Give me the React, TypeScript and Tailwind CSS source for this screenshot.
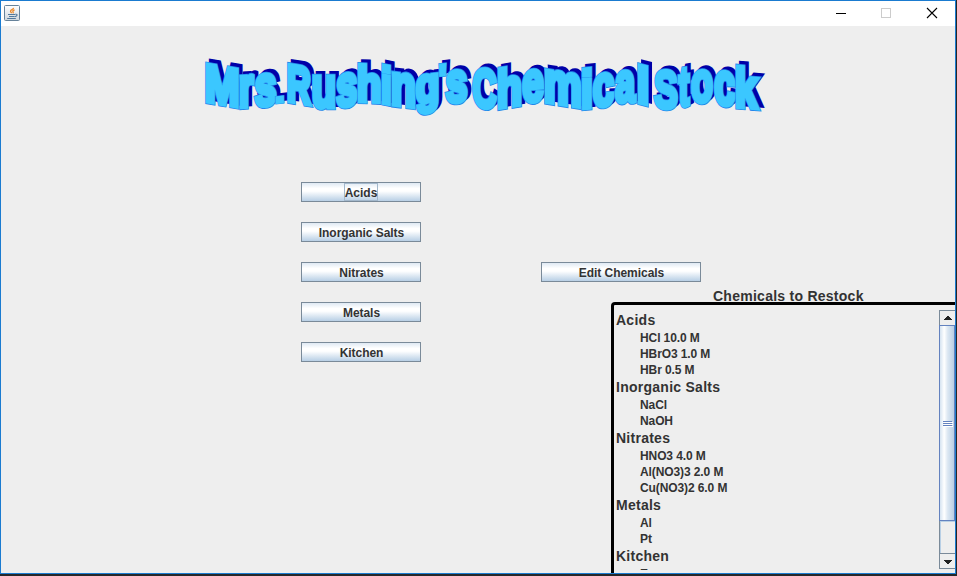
import React from "react";

type Glyph = {
  ch: string;
  left: number;
  right: number;
  top: number;
  bottom: number;
  drop: number;
};

const g = (ch: string, left: number, right: number, top: number, bottom: number, drop = 0): Glyph => ({
  ch, left, right, top, bottom, drop,
});

// Letter boxes of the warped banner, in window coordinates.
const BANNER: Glyph[] = [
  g("M", 205, 239.5, 61, 103.5, 6),
  g("r", 239, 255, 74, 110, -1),
  g("s", 253.5, 277, 73, 109, -2),
  g(".", 275, 284.5, 96, 104.5, -1),
  g("R", 287, 312.5, 61.5, 103.5, 4),
  g("u", 312, 336, 73, 110, 0),
  g("s", 335, 358, 73, 110, -3),
  g("h", 357, 381.5, 62.5, 103.5, 1),
  g("i", 381, 391.5, 63, 105, 2),
  g("n", 391, 416, 70, 107, 3),
  g("g", 415, 439.5, 74, 116, -3),
  g("'", 438, 447, 63, 77, -1),
  g("s", 444.5, 468, 69, 105, -1),
  g("C", 472, 497.5, 64.5, 109, 2),
  g("h", 497, 522, 67.5, 111, -4),
  g("e", 521, 545, 69, 105, -2),
  g("m", 544, 582, 67, 104, 6),
  g("i", 581, 592.5, 67.5, 111, -1),
  g("c", 591.5, 615.5, 73, 110, -3),
  g("a", 614, 637.5, 69.5, 105, -1),
  g("l", 637, 649, 62.5, 104.5, 3),
  g("S", 653, 678.5, 67, 110, 1),
  g("t", 677, 691, 67, 109, -2),
  g("o", 690, 713.5, 69, 105, -1),
  g("c", 713, 736.5, 68, 106, 3),
  g("k", 735, 759.5, 64, 109, 2),
];

const FACE = "'Liberation Sans', Arial, sans-serif";
const STROKE = 5.2;

// Maps a glyph's stroked ink box onto its slot in the banner.
function fit(gl: Glyph, ctx: CanvasRenderingContext2D): string {
  const m = ctx.measureText(gl.ch);
  const inset = STROKE / 2;
  const w = m.actualBoundingBoxLeft + m.actualBoundingBoxRight + STROKE;
  const h = m.actualBoundingBoxAscent + m.actualBoundingBoxDescent + STROKE;
  const a = (gl.right - gl.left) / w;
  const b = gl.drop / w;
  const d = (gl.bottom - gl.top) / h;
  const inkLeft = m.actualBoundingBoxLeft + inset;
  const e = gl.left + a * inkLeft;
  const f = gl.top + d * (m.actualBoundingBoxAscent + inset) + b * inkLeft;
  return `matrix(${a} ${b} 0 ${d} ${e} ${f})`;
}

function Banner() {
  const ctx = document.createElement("canvas").getContext("2d")!;
  ctx.font = `bold 50px ${FACE}`;
  const items = BANNER.map((gl) => ({ ch: gl.ch, t: fit(gl, ctx) }));
  const layer = (it: { ch: string; t: string }, color: string, width: number) => (
    <text transform={it.t} fill={color} stroke={color} strokeWidth={width} strokeMiterlimit="3">
      {it.ch}
    </text>
  );
  return (
    <svg className="ml-[199px] mt-6 block shrink-0" width="570" height="72" viewBox="200 50 570 72" fontFamily={FACE} fontWeight="bold" fontSize="50">
      <g transform="translate(3.6 -3.2)">
        {items.map((it, i) => <g key={i}>{layer(it, "#0000a8", STROKE)}</g>)}
      </g>
      {items.map((it, i) => (
        <g key={i}>
          {layer(it, "#2386ea", STROKE + 0.6)}
          {layer(it, "#3bc7ff", STROKE - 0.9)}
        </g>
      ))}
    </svg>
  );
}

function SwingButton({ label, wide, focused }: { label: string; wide?: boolean; focused?: boolean }) {
  return (
    <button
      className={`flex h-5 shrink-0 items-center justify-center border border-[#7a8a99] bg-[linear-gradient(#dfe9f3_0%,#ffffff_30%,#ffffff_45%,#b8cfe5_100%)] text-[12px] font-bold leading-none ${wide ? "w-40" : "w-[120px]"}`}
    >
      <span className={`flex h-[18px] items-center border pt-px ${focused ? "border-[#a3b8cc]" : "border-transparent pl-px tracking-[-0.04px]"}`}>{label}</span>
    </button>
  );
}

const STOCK = [
  { name: "Acids", items: ["HCl 10.0 M", "HBrO3 1.0 M", "HBr 0.5 M"] },
  { name: "Inorganic Salts", items: ["NaCl", "NaOH"] },
  { name: "Nitrates", items: ["HNO3 4.0 M", "Al(NO3)3 2.0 M", "Cu(NO3)2 6.0 M"] },
  { name: "Metals", items: ["Al", "Pt"] },
  { name: "Kitchen", items: ["E"] },
];

function ArrowBox({ down }: { down?: boolean }) {
  return (
    <div className={`flex w-full shrink-0 items-center justify-center bg-[#eeeeee] ${down ? "h-4 border-y border-[#7a8a99] pt-[2px]" : "h-[14px]"}`}>
      <svg width="8" height="4" viewBox="0 0 8 4" shapeRendering="crispEdges" fill="#222">
        {down ? <path d="M0 0h8v1H7v1H6v1H5v1H3V3H2V2H1V1H0z" /> : <path d="M3 0h2v1h1v1h1v1h1v1H0V3h1V2h1V1h1z" />}
      </svg>
    </div>
  );
}

function ScrollBar() {
  return (
    <div className="flex h-[259px] w-4 shrink-0 flex-col border-l border-t border-[#7a8a99]">
      <ArrowBox />
      <div className="-ml-px flex h-[196px] shrink-0 flex-col items-center justify-center gap-px border border-[#6382bf] bg-[linear-gradient(90deg,#d5e3f1_0%,#ffffff_30%,#dce7f2_55%,#b8cfe5_100%)]">
        {[0, 1, 2].map((i) => (
          <div key={i} className="h-px w-[9px] bg-[#6382bf] shadow-[1px_1px_0_#fff]" />
        ))}
      </div>
      <div className="flex-1 border-l border-t border-[#b8cfe5]" />
      <ArrowBox down />
    </div>
  );
}

export default function App() {
  return (
    <div className="flex h-[576px] w-[957px] flex-col overflow-hidden bg-[#262729] font-['Liberation_Sans',Arial,sans-serif] text-[#333333]">
      <div className="flex h-[574px] w-[956px] flex-col overflow-hidden border border-[#1a7bd0] bg-[#eeeeee]">
        <header className="flex h-[25px] shrink-0 items-center bg-white">
          <svg className="ml-[3px] -mt-px" width="16" height="16" viewBox="0 0 16 16">
            <defs>
              <linearGradient id="cup" x1="0" y1="0" x2="0" y2="1">
                <stop offset="0" stopColor="#ffffff" />
                <stop offset="1" stopColor="#cfd6dc" />
              </linearGradient>
            </defs>
            <rect x=".5" y=".5" width="15" height="15" rx="1" fill="url(#cup)" stroke="#66829a" />
            <path d="M9.5 2.8C9.8 4.4 6.4 4.8 6.5 6.2c.1.9 1 1.2 1.1 2.1M10.6 4.8c-1.4.6-2.3 1.2-1.6 2 .5.6.2 1.1-.2 1.5" fill="none" stroke="#ed8b2d" strokeWidth="1.3" />
            <path d="M4 9.5h7M5 11.5h5.5M3.2 13.5h8.6M11.2 9.3c3-.6 2.2 2-.4 2.3" fill="none" stroke="#52799c" strokeWidth="1.1" />
          </svg>
          <div className="ml-auto flex items-center">
            <svg width="120" height="25" viewBox="0 0 120 25" fill="none" shapeRendering="crispEdges">
              <path d="M1 12.5h10" stroke="#000" />
              <path d="M46.5 7.5h9v9h-9z" stroke="#cccccc" />
              <path d="M92 7l10 10M102 7L92 17" stroke="#000" strokeWidth="1.1" shapeRendering="auto" />
            </svg>
          </div>
        </header>

        <Banner />

        <main className="flex min-h-0 flex-1 items-start">
          <nav className="ml-[300px] mt-[60px] flex w-[240px] shrink-0 flex-col gap-5">
            <SwingButton label="Acids" focused />
            <SwingButton label="Inorganic Salts" />
            <SwingButton label="Nitrates" />
            <SwingButton label="Metals" />
            <SwingButton label="Kitchen" />
          </nav>
          <section className="mt-[140px] flex w-[414px] shrink-0 flex-col">
            <SwingButton label="Edit Chemicals" wide />
            <h2 className="ml-[172px] mt-[6px] h-[14px] whitespace-nowrap text-[14px] font-bold leading-4 tracking-[0.26px]">Chemicals to Restock</h2>
            <div className="ml-[70px] flex h-[290px] items-start rounded-tl-[4px] border-l-[3px] border-t-[3px] border-black">
              <div className="h-[265px] flex-1 overflow-hidden pl-[2px] pt-[6px] font-bold">
                {STOCK.map((group) => (
                  <div key={group.name}>
                    <h3 className="h-[19px] text-[14px] leading-[19px] tracking-[0.26px]">{group.name}</h3>
                    <ul className="pl-6">
                      {group.items.map((item) => (
                        <li key={item} className="h-4 text-[12px] leading-4 tracking-[-0.1px]">{item}</li>
                      ))}
                    </ul>
                  </div>
                ))}
              </div>
              <div className="pt-[5px]">
                <ScrollBar />
              </div>
            </div>
          </section>
        </main>
      </div>
    </div>
  );
}
